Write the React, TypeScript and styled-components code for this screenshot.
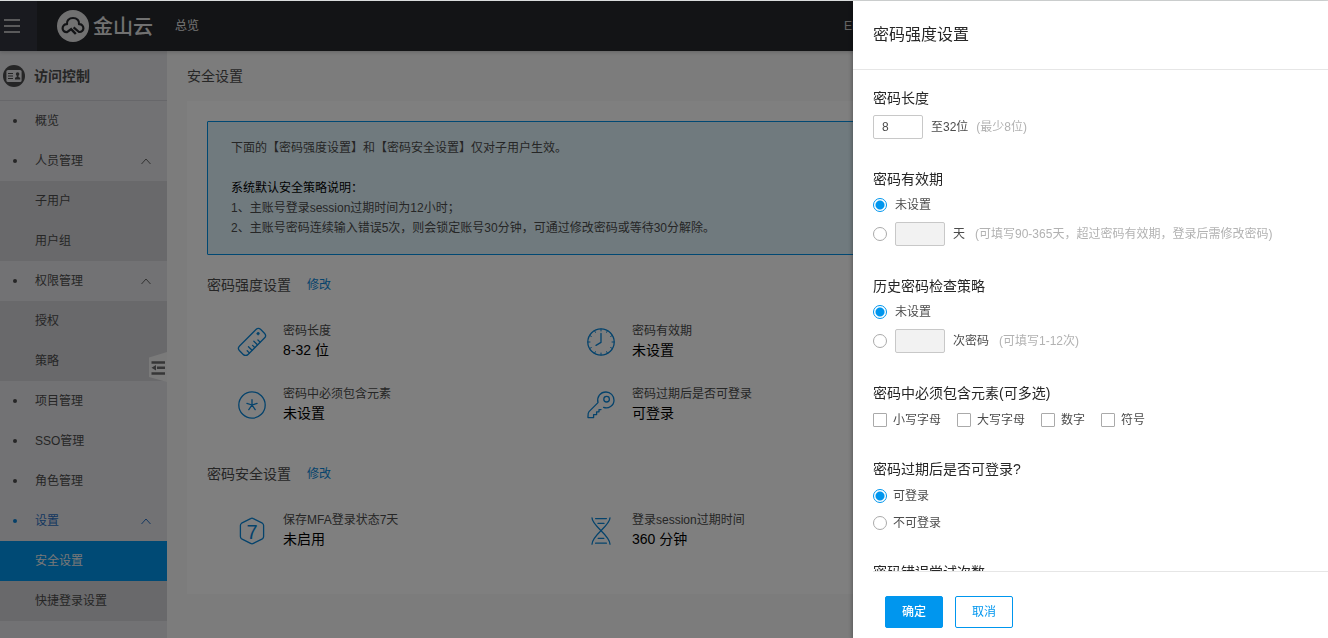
import React from 'react';
import styled, { createGlobalStyle, css } from 'styled-components';

const blue = '#0096ee';

const GlobalStyle = createGlobalStyle`
  *, *::before, *::after { box-sizing: border-box; }
  body {
    margin: 0;
    font-family: 'Liberation Sans', 'Noto Sans CJK SC', sans-serif;
    font-size: 12px;
    line-height: 20px;
    color: #4c4c4c;
    background: #f8f8f8;
  }
  button, input { font: inherit; color: inherit; }
  h1, h2, h3, p, ul, dl, dd, fieldset, legend { margin: 0; padding: 0; border: 0; }
  ul { list-style: none; }
  a { text-decoration: none; }
`;

const Page = styled.div`
  display: flex;
  flex-direction: column;
  height: 100vh;
  overflow: hidden;
  border-top: 1px solid #d9dcdc;
`;

const Header = styled.header`
  display: flex;
  flex: none;
  align-items: center;
  height: 50px;
  background: #26282d;
  color: #e6e6e6;
  box-shadow: 0 1px 4px rgba(0, 0, 0, 0.2);
  z-index: 1;
`;

const MenuButton = styled.button`
  display: flex;
  align-items: center;
  width: 37px;
  height: 100%;
  padding: 0 4px;
  border: 0;
  background: #32353e;
`;

const Brand = styled.a`
  display: flex;
  align-items: center;
  gap: 4px;
  margin-left: 20px;
  color: #e2e2e2;
  font-family: 'Noto Sans CJK SC', sans-serif;
  font-size: 20px;
  font-weight: 500;
  line-height: 32px;
`;

const HeaderLink = styled.a`
  margin-left: 22px;
  color: #e6e6e6;
`;

const HeaderTools = styled.nav`
  flex: 0 0 484px;
  margin-left: auto;
`;

const LangButton = styled.button`
  padding: 0;
  border: 0;
  background: none;
  color: #c8c8c8;
`;

const Columns = styled.div`
  display: flex;
  flex: 1;
  min-height: 0;
`;

const Sidebar = styled.aside`
  flex: 0 0 167px;
  position: relative;
  background: #e4e4e8;
`;

const SidebarTitle = styled.h1`
  display: flex;
  align-items: center;
  gap: 9px;
  height: 50px;
  padding-left: 3px;
  border-bottom: 1px solid #cfcfd4;
  font-size: 14px;
  font-weight: 700;
  color: #4c4c4c;
`;

const MenuEntry = styled.a<{ $open?: boolean }>`
  display: flex;
  align-items: center;
  height: 40px;
  padding: 0 16px 0 13px;
  color: ${(p) => (p.$open ? '#2a6fc0' : '#4c4c4c')};

  &::before {
    content: '';
    width: 4px;
    height: 4px;
    margin-right: 18px;
    border-radius: 50%;
    background: ${(p) => (p.$open ? '#0a7fd0' : '#4c4c4c')};
  }

  svg { margin-left: auto; }
`;

const SubEntry = styled.a<{ $active?: boolean }>`
  display: block;
  height: 40px;
  padding-left: 35px;
  line-height: 40px;
  color: ${(p) => (p.$active ? '#f0f0f0' : '#4c4c4c')};
  background: ${(p) => (p.$active ? '#0094ea' : '#d2d2d6')};
`;

const CollapseTab = styled.button`
  position: absolute;
  top: 301px;
  right: 0;
  padding: 0;
  border: 0;
  background: none;
  line-height: 0;
`;

const Main = styled.main`
  flex: 1;
  min-width: 0;
  padding: 0 20px;
`;

const PageTitle = styled.h2`
  height: 50px;
  font-size: 14px;
  font-weight: 400;
  line-height: 50px;
`;

const Card = styled.div`
  padding: 20px 20px 45px;
  background: #fff;
`;

const Notice = styled.div`
  padding: 16px 23px;
  border: 1px solid #0090e6;
  border-radius: 1px;
  background: #e1f5fd;
  color: #4c4c4c;
`;

const NoticeHeading = styled.p`
  margin-top: 20px;
  color: #000;
`;

const SectionHead = styled.div<{ $first?: boolean }>`
  display: flex;
  align-items: center;
  gap: 16px;
  margin-top: ${(p) => (p.$first ? 20 : 41)}px;
`;

const SectionTitle = styled.h3`
  font-size: 14px;
  font-weight: 400;
`;

const EditLink = styled.a`
  color: #0a86d8;
`;

const Facts = styled.dl`
  display: grid;
  grid-template-columns: repeat(3, 1fr);
  row-gap: 24px;
  padding: 0 4px 0 30px;
  margin-top: 26px;
`;

const Fact = styled.div`
  display: grid;
  grid-template-columns: 30px 1fr;
  grid-template-rows: 20px 19px;
  column-gap: 16px;
  align-items: center;

  svg { grid-row: 1 / 3; margin-top: 2px; }
`;

const FactValue = styled.dd`
  font-size: 14px;
  line-height: 19px;
  color: #000;
`;

const Overlay = styled.div`
  position: fixed;
  inset: 1px 0 0;
  background: rgba(0, 0, 0, 0.5);
  z-index: 2;
`;

const Drawer = styled.form`
  position: fixed;
  top: 1px;
  right: 0;
  bottom: 0;
  display: flex;
  flex-direction: column;
  width: 475px;
  max-width: 100vw;
  background: #fff;
  box-shadow: 0 2px 5px rgba(0, 0, 0, 0.4);
  z-index: 3;
`;

const DrawerTitle = styled.h2`
  flex: none;
  height: 69px;
  padding-left: 20px;
  border-bottom: 1px solid #e6e6e6;
  font-size: 16px;
  font-weight: 400;
  line-height: 68px;
  color: #262626;
`;

const DrawerBody = styled.div`
  flex: 1;
  min-height: 0;
  padding: 18px 20px 0;
  overflow-y: auto;
  scrollbar-width: none;
`;

const Group = styled.fieldset<{ $compact?: boolean }>`
  min-width: 0;
  margin-bottom: ${(p) => (p.$compact ? 29 : 30)}px;
`;

const GroupTitle = styled.legend`
  margin-bottom: 7px;
  font-size: 14px;
  line-height: 20px;
  color: #262626;
`;

const Line = styled.div`
  display: flex;
  align-items: center;
  gap: 8px;
  line-height: 18px;

  & + & { margin-top: 8px; }
`;

const OptionLabel = styled.label`
  display: flex;
  align-items: center;
  gap: 6px;
`;

const OptionList = styled.div<{ $inline?: boolean }>`
  display: flex;
  flex-direction: ${(p) => (p.$inline ? 'row' : 'column')};
  gap: ${(p) => (p.$inline ? '16px' : '7px')};
`;

const choice = css`
  appearance: none;
  flex: none;
  width: 14px;
  height: 14px;
  margin: 0;
  border: 1px solid #aaa;
  background: #fff;
`;

const Radio = styled.input.attrs({ type: 'radio' })`
  ${choice}
  border-radius: 50%;

  &:checked {
    border-color: ${blue};
    background: radial-gradient(circle, ${blue} 4px, #fff 5px);
  }
`;

const Checkbox = styled.input.attrs({ type: 'checkbox' })`
  ${choice}
  border-radius: 1px;

  &:checked { background: ${blue}; }
`;

const NumberBox = styled.input.attrs({ type: 'text' })`
  width: 50px;
  height: 24px;
  padding: 0 8px;
  border: 1px solid #c8c8c8;
  border-radius: 2px;
  background: #fff;

  &:disabled { background: #f2f2f2; }
`;

const Hint = styled.span<{ $near?: boolean }>`
  margin-left: ${(p) => (p.$near ? 0 : 2)}px;
  color: #b2b2b2;
`;

const Footer = styled.footer`
  display: flex;
  flex: none;
  gap: 12px;
  margin-left: 20px;
  padding: 24px 12px 10px;
  border-top: 1px solid #e6e6e6;
`;

const Button = styled.button<{ $primary?: boolean }>`
  width: 58px;
  height: 32px;
  padding: 0;
  border: 1px solid ${blue};
  border-radius: 2px;
  background: ${(p) => (p.$primary ? blue : '#fff')};
  color: ${(p) => (p.$primary ? '#fff' : blue)};
  font-weight: ${(p) => (p.$primary ? 500 : 400)};
`;

const Chevron = ({ color = '#666' }: { color?: string }) => (
  <svg width="10" height="8" viewBox="0 0 10 8" fill="none" stroke={color} aria-hidden="true">
    <path d="M0.5 7 L5 2 L9.5 7" />
  </svg>
);

const FactIcon = ({ children }: { children: React.ReactNode }) => (
  <svg
    width="30"
    height="30"
    viewBox="0 0 30 30"
    fill="none"
    stroke="#0a86d8"
    strokeWidth="1.3"
    strokeLinecap="round"
    strokeLinejoin="round"
    aria-hidden="true"
  >
    {children}
  </svg>
);

const RulerIcon = () => (
  <FactIcon>
    <g transform="rotate(-45 15 15)">
      <rect x="0" y="9" width="30" height="12" rx="3.4" />
      <path d="M5.4 20.8 v-3 M9.2 20.8 v-5 M13 20.8 v-3 M16.8 20.8 v-5 M20.6 20.8 v-3" />
      <circle cx="25.2" cy="13.4" r="1.3" fill="#0a86d8" strokeWidth="0.6" />
    </g>
  </FactIcon>
);

const AsteriskIcon = () => (
  <FactIcon>
    <circle cx="15" cy="15" r="13.2" />
    <path d="M15 9.6 V15 M15 15 L9.9 13.4 M15 15 L20.1 13.4 M15 15 L11.8 19.6 M15 15 L18.2 19.6" />
  </FactIcon>
);

const ClockIcon = () => (
  <FactIcon>
    <circle cx="15" cy="15" r="13.2" />
    <path d="M15 6.4 V15.4 L10 18.4" />
    <path
      strokeWidth="1"
      d="M15 2 v2 M15 26 v2 M2 15 h2 M26 15 h2 M8.5 3.7 l.9 1.6 M21.5 3.7 l-.9 1.6 M3.7 8.5 l1.6 .9 M26.3 8.5 l-1.6 .9 M3.7 21.5 l1.6 -.9 M26.3 21.5 l-1.6 -.9 M8.5 26.3 l.9 -1.6 M21.5 26.3 l-.9 -1.6"
    />
  </FactIcon>
);

const KeyIcon = () => (
  <FactIcon>
    <path d="M17.6 17.4 C22.4 19.2 28 15.6 28 10.2 C28 5.6 24.4 2 20 2 C14.4 2 10.6 7 12 12.6 L3 21.6 C1.8 22.8 2 24.6 2 27.6 H7.6 V24.6 H10.6 V21.8 H13 V19.6 H15" />
    <circle cx="20.6" cy="9.2" r="2.8" />
  </FactIcon>
);

const SevenIcon = () => (
  <FactIcon>
    <path d="M13.6 2.6 Q15 1.8 16.4 2.6 L25.4 7.2 Q26.6 7.9 26.6 9.4 V20.6 Q26.6 22.1 25.4 22.8 L16.4 27.4 Q15 28.2 13.6 27.4 L4.6 22.8 Q3.4 22.1 3.4 20.6 V9.4 Q3.4 7.9 4.6 7.2 Z" />
    <text
      x="15"
      y="23"
      textAnchor="middle"
      fill="#0a86d8"
      stroke="none"
      fontSize="20"
      fontFamily="'Liberation Sans', sans-serif"
    >
      7
    </text>
  </FactIcon>
);

const HourglassIcon = () => (
  <FactIcon>
    <path d="M6 1.8 C6 10 24 19 24 28.2 M24 1.8 C24 10 6 19 6 28.2" />
    <path d="M9.6 2.6 H20.4 M12 7.4 H18 M12.2 22.4 H17.8 M9.6 27.2 H20.4" />
  </FactIcon>
);

const Logo = () => (
  <svg width="32" height="32" viewBox="0 0 32 32" fill="none" aria-hidden="true">
    <circle cx="16" cy="16" r="16" fill="#e2e2e2" />
    <path
      d="M15 18.5 L10 22.2 C7.4 22.4 5.6 20.4 5.6 18.2 C5.6 15.8 7.6 14 10 14.2 C9.4 10.6 12.2 8 16 8 C19.8 8 22.6 10.6 22 14.2 C24.4 14 26.4 15.8 26.4 18.2 C26.4 20.4 24.6 22.2 22 22 L16.6 17.4"
      stroke="#26282d"
      strokeWidth="2.2"
      strokeLinejoin="round"
    />
    <path d="M14.6 19.6 L18.8 24" stroke="#26282d" strokeWidth="2.4" />
  </svg>
);

const AccessIcon = () => (
  <svg width="22" height="22" viewBox="0 0 22 22" aria-hidden="true">
    <circle cx="11" cy="11" r="11" fill="#4a4a4c" />
    <rect x="3.4" y="5" width="15.2" height="12" rx="1.6" fill="#e4e4e8" />
    <path d="M5 8.5 h5 M5 11 h5 M5 13.5 h5" stroke="#4a4a4c" />
    <circle cx="14.6" cy="9" r="1.8" fill="#4a4a4c" />
    <path d="M13.7 10 h1.8 v2 l1.7 .8 v1.7 h-5.2 v-1.7 l1.7 -.8 z" fill="#4a4a4c" />
  </svg>
);

type MenuGroup = { label: string; children?: string[]; open?: boolean };

const menu: MenuGroup[] = [
  { label: '概览' },
  { label: '人员管理', children: ['子用户', '用户组'] },
  { label: '权限管理', children: ['授权', '策略'] },
  { label: '项目管理' },
  { label: 'SSO管理' },
  { label: '角色管理' },
  { label: '设置', children: ['安全设置', '快捷登录设置'], open: true },
];

const strengthFacts = [
  { icon: <RulerIcon />, label: '密码长度', value: '8-32 位' },
  { icon: <ClockIcon />, label: '密码有效期', value: '未设置' },
  null,
  { icon: <AsteriskIcon />, label: '密码中必须包含元素', value: '未设置' },
  { icon: <KeyIcon />, label: '密码过期后是否可登录', value: '可登录' },
];

const safetyFacts = [
  { icon: <SevenIcon />, label: '保存MFA登录状态7天', value: '未启用' },
  { icon: <HourglassIcon />, label: '登录session过期时间', value: '360 分钟' },
];

const FactGrid = ({ facts }: { facts: typeof strengthFacts }) => (
  <Facts>
    {facts.map((fact, i) =>
      fact ? (
        <Fact key={fact.label}>
          {fact.icon}
          <dt>{fact.label}</dt>
          <FactValue>{fact.value}</FactValue>
        </Fact>
      ) : (
        <div key={i} />
      ),
    )}
  </Facts>
);

export default function App() {
  return (
    <>
      <GlobalStyle />
      <Page>
        <Header>
          <MenuButton type="button" aria-label="菜单">
            <svg width="16" height="14" viewBox="0 0 16 14" stroke="#e0e0e0" strokeWidth="1.6" aria-hidden="true">
              <path d="M0 1 H16 M0 7 H16 M0 13 H16" />
            </svg>
          </MenuButton>
          <Brand href="#">
            <Logo />
            金山云
          </Brand>
          <HeaderLink href="#">总览</HeaderLink>
          <HeaderTools>
            <LangButton type="button">EN</LangButton>
          </HeaderTools>
        </Header>
        <Columns>
          <Sidebar>
            <SidebarTitle>
              <AccessIcon />
              访问控制
            </SidebarTitle>
            <ul>
              {menu.map((group) => (
                <li key={group.label}>
                  <MenuEntry href="#" $open={group.open}>
                    {group.label}
                    {group.children && <Chevron color={group.open ? '#2a6fc0' : undefined} />}
                  </MenuEntry>
                  {group.children?.map((child) => (
                    <SubEntry key={child} href="#" $active={child === '安全设置'}>
                      {child}
                    </SubEntry>
                  ))}
                </li>
              ))}
            </ul>
            <CollapseTab type="button" aria-label="收起">
              <svg width="18" height="30" viewBox="0 0 18 30" aria-hidden="true">
                <path d="M0 5.5 L18 0 V30 L0 25 Z" fill="#f4f4f4" />
                <path d="M2.5 10.5 H16 M8 15.8 H16 M2.5 21.5 H16" stroke="#6c6c6e" strokeWidth="2.6" />
                <path d="M2.5 15.8 L7 13 V18.6 Z" fill="#6c6c6e" />
              </svg>
            </CollapseTab>
          </Sidebar>
          <Main>
            <PageTitle>安全设置</PageTitle>
            <Card>
              <Notice>
                <p>下面的【密码强度设置】和【密码安全设置】仅对子用户生效。</p>
                <NoticeHeading>系统默认安全策略说明：</NoticeHeading>
                <p>1、主账号登录session过期时间为12小时；</p>
                <p>2、主账号密码连续输入错误5次，则会锁定账号30分钟，可通过修改密码或等待30分解除。</p>
              </Notice>
              <SectionHead $first>
                <SectionTitle>密码强度设置</SectionTitle>
                <EditLink href="#">修改</EditLink>
              </SectionHead>
              <FactGrid facts={strengthFacts} />
              <SectionHead>
                <SectionTitle>密码安全设置</SectionTitle>
                <EditLink href="#">修改</EditLink>
              </SectionHead>
              <FactGrid facts={safetyFacts} />
            </Card>
          </Main>
        </Columns>
      </Page>
      <Overlay />
      <Drawer onSubmit={(e) => e.preventDefault()}>
        <DrawerTitle>密码强度设置</DrawerTitle>
        <DrawerBody>
          <Group>
            <GroupTitle>密码长度</GroupTitle>
            <Line>
              <NumberBox id="min-length" defaultValue="8" />
              <label htmlFor="min-length">至32位</label>
              <Hint $near>(最少8位)</Hint>
            </Line>
          </Group>
          <Group>
            <GroupTitle>密码有效期</GroupTitle>
            <Line>
              <Radio name="expiry" id="expiry-none" defaultChecked />
              <label htmlFor="expiry-none">未设置</label>
            </Line>
            <Line>
              <Radio name="expiry" aria-label="设置天数" />
              <NumberBox id="expiry-days" disabled />
              <label htmlFor="expiry-days">天</label>
              <Hint>(可填写90-365天，超过密码有效期，登录后需修改密码)</Hint>
            </Line>
          </Group>
          <Group>
            <GroupTitle>历史密码检查策略</GroupTitle>
            <Line>
              <Radio name="history" id="history-none" defaultChecked />
              <label htmlFor="history-none">未设置</label>
            </Line>
            <Line>
              <Radio name="history" aria-label="设置次数" />
              <NumberBox id="history-count" disabled />
              <label htmlFor="history-count">次密码</label>
              <Hint>(可填写1-12次)</Hint>
            </Line>
          </Group>
          <Group $compact>
            <GroupTitle>密码中必须包含元素(可多选)</GroupTitle>
            <OptionList $inline>
              {['小写字母', '大写字母', '数字', '符号'].map((label) => (
                <OptionLabel key={label}>
                  <Checkbox />
                  {label}
                </OptionLabel>
              ))}
            </OptionList>
          </Group>
          <Group $compact>
            <GroupTitle>密码过期后是否可登录?</GroupTitle>
            <OptionList>
              <OptionLabel>
                <Radio name="login" defaultChecked />
                可登录
              </OptionLabel>
              <OptionLabel>
                <Radio name="login" />
                不可登录
              </OptionLabel>
            </OptionList>
          </Group>
          <Group>
            <GroupTitle>密码错误尝试次数</GroupTitle>
          </Group>
        </DrawerBody>
        <Footer>
          <Button type="submit" $primary>
            确定
          </Button>
          <Button type="button">取消</Button>
        </Footer>
      </Drawer>
    </>
  );
}
